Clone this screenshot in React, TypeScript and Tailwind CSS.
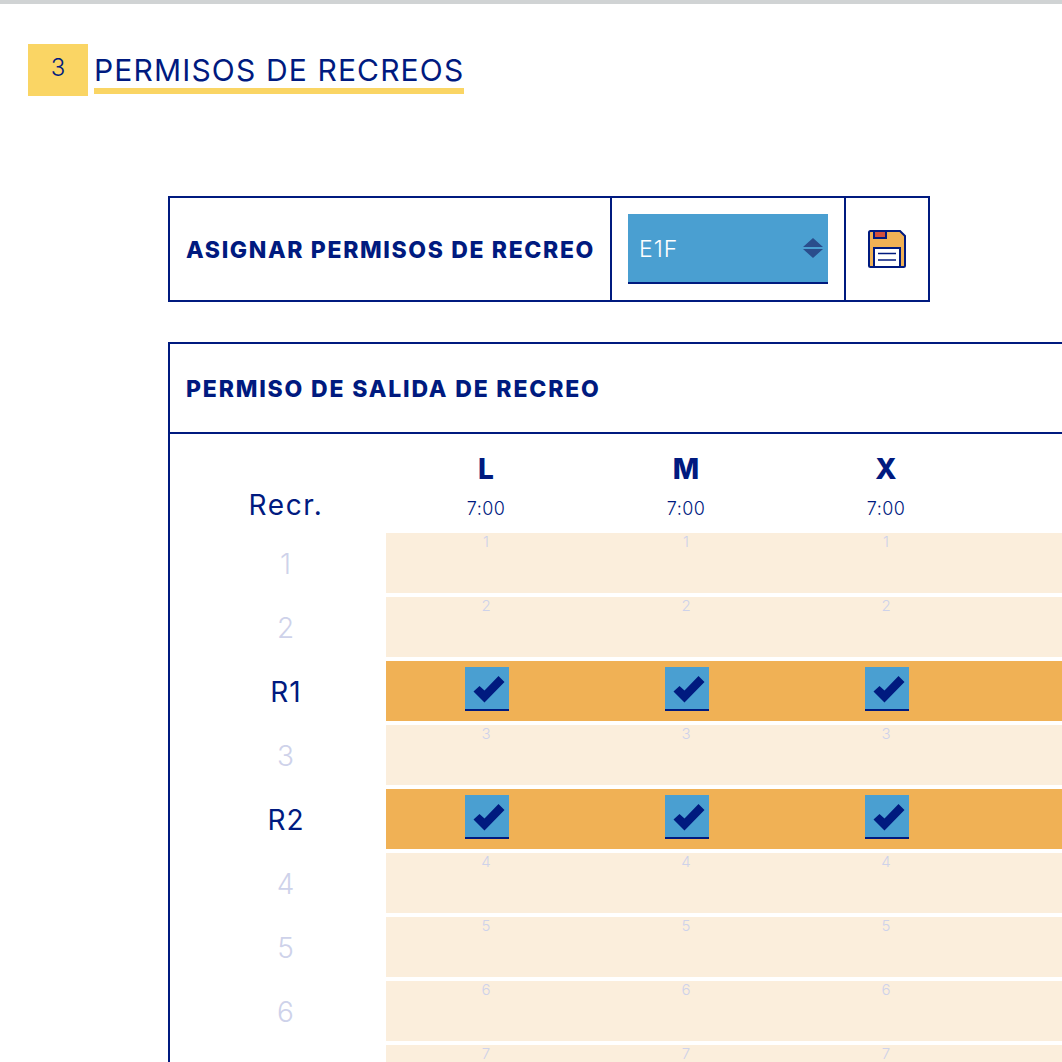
const navy = "text-[#001a7f]"

const days = ["L", "M", "X"]

// the last row's label falls below the fold in the screenshot
const rows = [
  { label: "1", slot: "1" },
  { label: "2", slot: "2" },
  { label: "R1", recreo: true },
  { label: "3", slot: "3" },
  { label: "R2", recreo: true },
  { label: "4", slot: "4" },
  { label: "5", slot: "5" },
  { label: "6", slot: "6" },
  { label: "", slot: "7" },
]

function SaveIcon() {
  return (
    <svg width="40" height="40" viewBox="0 0 40 40">
      <path d="M2 3.500A1.500 1.500 0 0 1 3.500 2H33l5 5v29.500a1.500 1.500 0 0 1-1.500 1.500H3.500A1.500 1.500 0 0 1 2 36.500z" fill="#f0b155" stroke="#001a7f" strokeWidth="2" />
      <rect x="7" y="2" width="12" height="7" fill="#d2503c" stroke="#001a7f" strokeWidth="2" />
      <rect x="7" y="19" width="26" height="19" fill="#fff" stroke="#001a7f" strokeWidth="2" />
      <path d="M11 24.500h18M11 31h18" stroke="#001a7f" strokeWidth="1.600" />
    </svg>
  )
}

function Arrows() {
  return (
    <svg width="20" height="22" viewBox="0 0 20 22">
      <path d="M10 1l10 9H0zM0 12h20L10 21z" fill="#2a4d8c" />
    </svg>
  )
}

function Check() {
  return (
    <div className="h-11 w-11 border-b-2 border-[#001a7f] bg-[#4a9fd1]">
      <svg width="44" height="42" viewBox="0 0 44 42">
        <path d="M8.500 24.500 14.500 19 19.500 23.500 33.500 9 39.500 15 19.500 35.500z" fill="#001a7f" />
      </svg>
    </div>
  )
}

export default function App() {
  return (
    <div className={`h-[1062px] w-[1062px] overflow-hidden bg-white font-['Inter',sans-serif] ${navy}`}>
      <div className="h-1 bg-[#d0d3d4]" />

      <div className="mt-10 ml-7 flex items-start">
        <div className="flex h-[52px] w-[60px] items-start justify-center bg-[#fad564] pt-3 text-[24px] leading-6 font-light">3</div>
        <h1 className="mt-2 ml-1.5 h-[42px] border-b-[6px] border-[#fad564] text-[30px] leading-9 tracking-[1.15px] whitespace-nowrap">
          PERMISOS DE RECREOS
        </h1>
      </div>

      <div className="mt-[100px] ml-[168px] flex h-[106px] w-[762px] border-2 border-[#001a7f]">
        <div className="flex w-[440px] items-center pt-0.5 pl-4 text-[23px] font-extrabold tracking-[1.63px] whitespace-nowrap">
          ASIGNAR PERMISOS DE RECREO
        </div>
        <div className="flex w-[236px] items-center justify-center border-x-2 border-[#001a7f]">
          <div className="flex h-[70px] w-[200px] items-center justify-between border-b-2 border-[#001a7f] bg-[#4a9fd1] pr-[5px] pl-[11px] text-[23px] font-light tracking-[1px] text-white">
            <span className="pt-0.5">E1F</span>
            <Arrows />
          </div>
        </div>
        <div className="flex flex-1 items-center justify-center">
          <SaveIcon />
        </div>
      </div>

      <div className="mt-10 ml-[168px] border-t-2 border-l-2 border-[#001a7f]">
        <div className="flex h-[90px] items-center border-b-2 border-[#001a7f] pt-0.5 pl-4 text-[23px] font-extrabold tracking-[1.82px] whitespace-nowrap">
          PERMISO DE SALIDA DE RECREO
        </div>

        <div className="flex h-[99px]">
          <div className="flex w-[216px] shrink-0 items-end justify-center pb-2.5 pl-4 text-[28px] leading-9 tracking-[1.6px]">Recr.</div>
          {days.map((d) => (
            <div key={d} className="flex w-[200px] shrink-0 flex-col items-center pt-[17px]">
              <span className="text-[28px] leading-9 font-extrabold">{d}</span>
              <span className="mt-2.5 text-[18px] leading-6 font-light tracking-[0.4px]">7:00</span>
            </div>
          ))}
        </div>

        <div className="flex flex-col gap-1">
          {rows.map((r) => (
            <div key={r.slot ?? r.label} className="flex h-[60px]">
              <div className={`flex w-[216px] shrink-0 items-center justify-center pt-0.5 pl-4 text-[28px] tracking-[1px] ${r.recreo ? "" : "font-light text-[#ced2ea]"}`}>
                {r.label}
              </div>
              <div className={`flex flex-1 ${r.recreo ? "bg-[#f0b155]" : "bg-[#fbeedc]"}`}>
                {days.map((d) => (
                  <div key={d} className="flex w-[200px] shrink-0 justify-center">
                    {r.recreo ? (
                      <div className="mt-1.5 ml-0.5">
                        <Check />
                      </div>
                    ) : (
                      <span className="pt-0.5 text-[15px] leading-[14px] font-light text-[#ced2ea]">{r.slot}</span>
                    )}
                  </div>
                ))}
              </div>
            </div>
          ))}
        </div>
      </div>
    </div>
  )
}
